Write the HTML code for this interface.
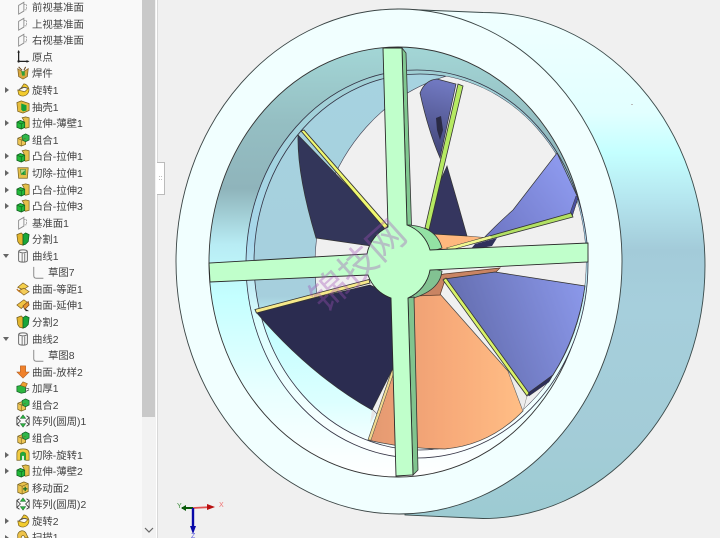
<!DOCTYPE html>
<html><head><meta charset="utf-8">
<style>
html,body{margin:0;padding:0;background:#f0f0f0;width:720px;height:538px;overflow:hidden}
#p{position:relative;width:720px;height:538px;overflow:hidden;background:#f0f0f0;font-family:"Liberation Sans","Noto Sans CJK SC",sans-serif;filter:blur(.3px)}
#tree{position:absolute;left:0;top:0;width:142px;height:538px;background:#f9f9f9;overflow:hidden}
.r{position:absolute;left:32px;margin-top:2px;font-size:10.4px;line-height:14px;color:#444;white-space:nowrap}
.r.s{left:48px}
.i{position:absolute;left:16px;width:14px;height:14px;margin-top:1px}
.i.s{left:32px}
.a{position:absolute;left:5px;width:0;height:0;border-left:4px solid #666;border-top:3px solid transparent;border-bottom:3px solid transparent}
.d{position:absolute;left:3px;width:0;height:0;border-top:4px solid #666;border-left:3px solid transparent;border-right:3px solid transparent}
#sb{position:absolute;left:142px;top:0;width:14px;height:538px;background:#f2f2f2}
#thumb{position:absolute;left:0;top:0;width:13px;height:417px;background:#c9c9c9}
#dv{position:absolute;left:156px;top:0;width:1px;height:538px;background:#fff}
#ln{position:absolute;left:157px;top:0;width:1px;height:538px;background:#d8d8d8}
#hd{position:absolute;left:157px;top:162px;width:8px;height:33px;background:#fff;border:1px solid #bbb;border-left:0;box-sizing:border-box;color:#888;font-size:7px;line-height:31px;text-align:center}
svg.m{position:absolute;left:0;top:0}
</style></head><body><div id="p">
<svg class="m" width="720" height="538" viewBox="0 0 720 538">
<defs>
<linearGradient id="gb" gradientUnits="userSpaceOnUse" x1="0" y1="10" x2="0" y2="520">
<stop offset="0" stop-color="#f0ffff"/><stop offset=".2" stop-color="#e2ffff"/><stop offset=".28" stop-color="#c4ffff"/><stop offset=".37" stop-color="#b5e6ef"/><stop offset=".47" stop-color="#a3cbd9"/><stop offset=".58" stop-color="#a6cfdc"/><stop offset=".85" stop-color="#a3ccd7"/><stop offset="1" stop-color="#9ccbd2"/>
</linearGradient>
<linearGradient id="gw" gradientUnits="userSpaceOnUse" x1="0" y1="47" x2="0" y2="476">
<stop offset="0" stop-color="#a3d6d6"/><stop offset=".17" stop-color="#95bfc3"/><stop offset=".33" stop-color="#8fb4bb"/><stop offset=".46" stop-color="#b8ecf4"/><stop offset=".58" stop-color="#c4ffff"/><stop offset=".8" stop-color="#e8ffff"/><stop offset="1" stop-color="#ffffff"/>
</linearGradient>
<linearGradient id="gst" gradientUnits="userSpaceOnUse" x1="0" y1="70" x2="0" y2="458">
<stop offset="0" stop-color="#a0cfd4"/><stop offset=".45" stop-color="#a8d8ec"/><stop offset=".65" stop-color="#dcffff"/><stop offset="1" stop-color="#ffffff"/>
</linearGradient>
<linearGradient id="gi" gradientUnits="userSpaceOnUse" x1="0" y1="70" x2="0" y2="460">
<stop offset="0" stop-color="#a6d3e0"/><stop offset=".58" stop-color="#a6cfdd"/><stop offset=".66" stop-color="#c4feff"/><stop offset=".85" stop-color="#dcffff"/><stop offset="1" stop-color="#ffffff"/>
</linearGradient>
<linearGradient id="gor" gradientUnits="userSpaceOnUse" x1="375" y1="0" x2="520" y2="0">
<stop offset="0" stop-color="#e59a72"/><stop offset=".45" stop-color="#f6a878"/><stop offset="1" stop-color="#ffbd85"/>
</linearGradient>
<linearGradient id="gd" gradientUnits="userSpaceOnUse" x1="445" y1="340" x2="585" y2="290">
<stop offset="0" stop-color="#5f68a8"/><stop offset="1" stop-color="#8b98ea"/>
</linearGradient>
<linearGradient id="ge" gradientUnits="userSpaceOnUse" x1="490" y1="240" x2="570" y2="180">
<stop offset="0" stop-color="#6e76c4"/><stop offset="1" stop-color="#8c98ec"/>
</linearGradient>
<linearGradient id="gf" gradientUnits="userSpaceOnUse" x1="450" y1="85" x2="430" y2="170">
<stop offset="0" stop-color="#7078c0"/><stop offset="1" stop-color="#383a68"/>
</linearGradient>
<clipPath id="cs"><ellipse cx="420" cy="262" rx="166" ry="188"/></clipPath>
</defs>

<path d="M397 9 L483 12.5 A222 253 0 0 1 483 518.5 L405 515 Z" fill="url(#gb)" stroke="#3a4a4a" stroke-width=".9"/>
<ellipse cx="399" cy="261.5" rx="223" ry="252.5" fill="#f1ffff" stroke="#3a4444" stroke-width=".9"/>
<ellipse cx="398" cy="262" rx="189" ry="215" fill="url(#gw)" stroke="#333" stroke-width=".9"/>
<ellipse cx="417" cy="264" rx="171" ry="194" fill="url(#gst)" stroke="#334" stroke-width=".8"/>
<ellipse cx="420" cy="262" rx="166" ry="188" fill="url(#gi)" stroke="#334" stroke-width=".8"/>
<g clip-path="url(#cs)"><ellipse cx="490" cy="265" rx="175" ry="195" fill="#f0f0f0" stroke="#445" stroke-width=".6"/></g>

<!-- Blade C orange -->
<path d="M368 440 L392 370 L415 296 L440 294 L508 371 L523 411 Q490 445 445 449 Q405 449 368 440 Z" fill="url(#gor)" stroke="#444" stroke-width=".7"/>
<path d="M368 440 L392 370 L394 372 L371 440 Z" fill="#f0d890" stroke="#444" stroke-width=".5"/>
<path d="M415 296 L420 280 L444 274 L500 268 L495 273 L445 280 L440 295 Z" fill="#c98463" stroke="#5a3a2a" stroke-width=".7"/>
<path d="M508 371 L523 411 L527 396 Z" fill="#ececec" stroke="#666" stroke-width=".4"/>
<!-- orange upper -->
<path d="M425 236 L433 232 L467 236 L490 238 L450 250 L430 252 Z" fill="#ffb87e" stroke="#444" stroke-width=".6"/>

<!-- Blade F upper -->
<path d="M420 93 Q425 80 437 79 L456 84 L440 158 Q428 130 420 93 Z" fill="url(#gf)" stroke="#333" stroke-width=".7"/>
<path d="M447 166 L434 195 L425 228 L433 234 L467 236 L458 204 Z" fill="#35365f" stroke="#333" stroke-width=".7"/>
<path d="M436 118 L441 116 L443 130 L440 140 L437 130 Z" fill="#2a2a44"/>
<path d="M458 84 L463 86 L429 230 L425 228 Z" fill="#b6ea62" stroke="#333" stroke-width=".8"/>

<!-- Blade E -->
<path d="M557 153 L578 198 L572 216 L480 242 Q495 226 513 210 Z" fill="url(#ge)" stroke="#333" stroke-width=".7"/>
<path d="M578 198 L572 217 L570 213 L576 196 Z" fill="#4a50a0" stroke="#333" stroke-width=".5"/>
<path d="M475 244 L497 238 L492 246 L470 250 Z" fill="#30315c"/>
<path d="M447 248 L571 213 L573 217 L450 250 Z" fill="#b2e063" stroke="#333" stroke-width=".8"/>
<path d="M447 248 L490 236 L492 238 L450 250 Z" fill="#f0f890"/>

<!-- Blade D -->
<path d="M444 279 L495 272 L585 286 Q578 335 553 375 L527 394 Z" fill="url(#gd)" stroke="#333" stroke-width=".8"/>
<path d="M527 394 L553 375 L549 382 L529 396 Z" fill="#2e2f58" stroke="#333" stroke-width=".4"/>
<path d="M443 280 L446 278 L529 393 L527 396 Z" fill="#d8f268" stroke="#333" stroke-width=".8"/>

<!-- Blade A -->
<path d="M298 135 Q297 175 316 238 L378 247 L388 228 Z" fill="#33365a" stroke="#333" stroke-width=".7"/>
<path d="M301 131 L304 130 L388 226 L385 229 Z" fill="#f0f870" stroke="#333" stroke-width=".9"/>
<!-- Blade B -->
<path d="M256 312 L370 285 L393 296 L393 368 L372 410 Q310 375 256 312 Z" fill="#2b2c50" stroke="#333" stroke-width=".7"/>
<path d="M255 309.5 L369 279.5 L370 283 L256.5 313 Z" fill="#f6e98a" stroke="#333" stroke-width=".9"/>
<path d="M372 410 L376 413 L370 424 Z" fill="#e6e6e6"/>

<!-- Hub back -->
<path d="M407 225 Q436 226 442 248 L430 252 L414 232 Z" fill="#93e2a4" stroke="#333" stroke-width=".8"/>
<path d="M442 271 Q440 291 410 299 L408 290 L430 268 Z" fill="#82c292" stroke="#333" stroke-width=".8"/>
<!-- Spoke sides -->
<path d="M402 48 L406 53 L411.5 225 L407 225 Z" fill="#80c890" stroke="#333" stroke-width=".8"/>
<path d="M408 298 L414 297 L418 470 L413 475 Z" fill="#80c48e" stroke="#333" stroke-width=".8"/>
<!-- Spokes + hub -->
<path d="M383 48 L402 48 L407 225 A37 37 0 0 1 430 250 L588 243 L588 262 L430 270 A37 37 0 0 1 408 298 L413 475 L396 476 L391 298 A37 37 0 0 1 368 275 L210 282 L209 263 L367 254 A37 37 0 0 1 388 227 Z" fill="#c0ffcb" stroke="#2a2a2a" stroke-width=".9"/>

<!-- speck -->
<rect x="631" y="104" width="2" height="1" fill="#bbb"/>

<!-- Watermark -->
<text x="358" y="279" transform="rotate(-42 358 266)" text-anchor="middle" font-family="'Liberation Sans','Noto Sans CJK SC',sans-serif" font-size="38" fill="#a050b8" fill-opacity=".36">锦技网</text>

<!-- Triad -->
<path d="M193 508 L182 508" stroke="#0a5a0a" stroke-width="2"/>
<path d="M186 505 L181 508 L186 511 Z" fill="#0a5a0a"/>
<path d="M193 508 L212 507" stroke="#e05050" stroke-width="1.8"/>
<path d="M207 504 L215 507 L207 510 Z" fill="#b81010"/>
<path d="M193 508 L193 530" stroke="#0808a8" stroke-width="2.4"/>
<path d="M190 526 L193 534 L196 526 Z" fill="#0808a8"/>
<text x="177" y="508" font-size="7" fill="#3c8c3c" font-family="Liberation Sans">Y</text>
<text x="219" y="507" font-size="7" fill="#f07070" font-family="Liberation Sans">X</text>
<text x="191" y="538" font-size="7" fill="#6060e0" font-family="Liberation Sans">Z</text>

<symbol id="pl" viewBox="0 0 16 16"><path d="M3 5 L9 1.5 V11.5 L3 15 Z" fill="#f8f8f8" stroke="#8a8a8a" stroke-width="1"/><path d="M9 4 H12 V10 H9" fill="none" stroke="#9a9a9a" stroke-width="1" stroke-dasharray="2 1"/></symbol>
<symbol id="or" viewBox="0 0 16 16"><path d="M3 1 V13 H14" fill="none" stroke="#222" stroke-width="1.4"/><path d="M1.5 3 L3 0 L4.5 3 Z M12 11.5 L15.5 13 L12 14.5 Z" fill="#222"/><circle cx="3" cy="13" r="1.4" fill="#222"/></symbol>
<symbol id="we" viewBox="0 0 16 16"><path d="M2 3 L8 7 L14 3 L13 12 L8 15 L3 12 Z" fill="#d9a83e" stroke="#7a5a20" stroke-width=".8"/><path d="M6 6 L10 6 L10 11 L7 11 Z" fill="#2e9e3a"/><path d="M3 1 L7 5 M11 1 L9 5" stroke="#6a4a20" stroke-width="1.2"/></symbol>
<symbol id="re" viewBox="0 0 16 16"><path d="M9 1 A7 7 0 1 1 3 13 L2 8 L10 10 L14 6 L9 5 L5 7 Z" fill="#f3cc2e" stroke="#7e6420" stroke-width=".8"/><path d="M3 8 Q8 3 13 6" fill="none" stroke="#555" stroke-width="1"/></symbol>
<symbol id="sh" viewBox="0 0 16 16"><path d="M1 3 L6 1 L15 4 V12 L8 15 L2 13 Z" fill="#e6bd3e" stroke="#7a6020" stroke-width=".8"/><path d="M6 4 L12 6 V12 L8 13 L6 11 Z" fill="#13a13a"/></symbol>
<symbol id="ex" viewBox="0 0 16 16"><path d="M7 2 L11 1 L15 2 V13 L11 14 L9 13 V5 Z" fill="#e6c04a" stroke="#75601f" stroke-width=".8"/><path d="M1 7 L5 5 L10 7 V13 L6 15 L1 13 Z" fill="#22b93a" stroke="#0f5a1c" stroke-width=".8"/><path d="M1 7 L6 9 L10 7 M6 9 V15" fill="none" stroke="#0f5a1c" stroke-width=".7"/></symbol>
<symbol id="co" viewBox="0 0 16 16"><path d="M2 6 L7 4 L11 6 V13 L6 15 L2 13 Z" fill="#eec656" stroke="#75601f" stroke-width=".8"/><path d="M7 3 L11 1 L15 3 V8 L11 10 L7 8 Z" fill="#2fb84a" stroke="#17612a" stroke-width=".8"/><path d="M2 6 L6 8 L11 6 M6 8 V15" fill="none" stroke="#75601f" stroke-width=".7"/></symbol>
<symbol id="cu" viewBox="0 0 16 16"><path d="M2 2 H14 L13 14 H3 Z" fill="#e6c04a" stroke="#75601f" stroke-width=".8"/><path d="M5 4 H11 V10 H6 Z" fill="#b5d98a" stroke="#3f7f2e" stroke-width=".7"/><path d="M6 9 L10 5 V10 Z" fill="#159a33"/></symbol>
<symbol id="sp" viewBox="0 0 16 16"><path d="M1 3 L6 1 L8 3 L8 15 L4 14 L2 11 Z" fill="#e2b52e" stroke="#6e5a1d" stroke-width=".8"/><path d="M8 3 L11 1 L15 3 L14 11 L11 14 L8 15 Z" fill="#19a63a" stroke="#0f5a1c" stroke-width=".8"/></symbol>
<symbol id="cv" viewBox="0 0 16 16"><path d="M3 3 Q3 1 8 1 T13 3 V13 Q13 15 8 15 T3 13 Z" fill="#fafafa" stroke="#666" stroke-width="1.1"/><path d="M3 3 Q8 6 13 3 M7 5 V15 M10 5 V15" fill="none" stroke="#666" stroke-width="1"/></symbol>
<symbol id="sk" viewBox="0 0 16 16"><path d="M2 1 V11 Q2 14 5 14 H13" fill="none" stroke="#888" stroke-width="1.1"/></symbol>
<symbol id="of" viewBox="0 0 16 16"><path d="M2 6 L8 1 L14 5 L8 9 Z" fill="#f5d04c" stroke="#7a5a1d" stroke-width=".8"/><path d="M3 10 L9 7 L15 11 L9 15 Z" fill="#f4cc58" stroke="#7a5a1d" stroke-width=".8"/><path d="M1 8 Q3 11 6 12" fill="none" stroke="#c07520" stroke-width="1.4"/></symbol>
<symbol id="xt" viewBox="0 0 16 16"><path d="M1 8 L9 2 L13 5 L6 12 Z" fill="#f2c443" stroke="#7a5a1d" stroke-width=".8"/><path d="M8 9 L14 4 L15 8 L10 13 Z" fill="#e9952e" stroke="#7a4a1d" stroke-width=".8"/><path d="M10 12 L15 15 L11 15 Z" fill="#222"/></symbol>
<symbol id="lo" viewBox="0 0 16 16"><path d="M5 1 H11 V8 H15 L8 15 L1 8 H5 Z" fill="#f0812a" stroke="#a85418" stroke-width=".6"/></symbol>
<symbol id="tk" viewBox="0 0 16 16"><path d="M1 6 L6 5 L11 7 V13 L6 14 L1 12 Z" fill="#2cb73f" stroke="#17612a" stroke-width=".8"/><path d="M5 5 L8 1 L13 3 L11 7 Z" fill="#f0a030" stroke="#8a5a1d" stroke-width=".7"/><path d="M11 8 L15 9 M11 12 L15 10" stroke="#555" stroke-width="1"/></symbol>
<symbol id="pa" viewBox="0 0 16 16"><path d="M8 1 L11 5 H5 Z M8 15 L5 11 H11 Z" fill="#2cb73f" stroke="#17612a" stroke-width=".6"/><path d="M1 4 L5 8 L1 12 Z M15 4 L11 8 L15 12 Z" fill="#f7f7f7" stroke="#333" stroke-width=".9"/><path d="M1 4 L4 2 M15 4 L12 2 M1 12 L4 14 M15 12 L12 14" stroke="#333" stroke-width="1"/></symbol>
<symbol id="cr" viewBox="0 0 16 16"><path d="M1 14 V6 Q1 1 8 1 T15 6 V14 H11 V7 Q11 5 8 5 T5 7 V14 Z" fill="#f0ca42" stroke="#75601f" stroke-width=".8"/><path d="M5 14 V6 L8 4 L11 6 V14 H9 V9 H7 V14 Z" fill="#1faa3a"/></symbol>
<symbol id="mv" viewBox="0 0 16 16"><path d="M2 4 L9 1 L14 3 V12 L7 15 L2 13 Z" fill="#e9c24c" stroke="#75601f" stroke-width=".8"/><path d="M2 4 L7 6 L14 3 M7 6 V15" fill="none" stroke="#75601f" stroke-width=".7"/><path d="M8 9 H13 M10.5 6.5 V11.5" stroke="#126b24" stroke-width="1.4"/></symbol>
<symbol id="sw" viewBox="0 0 16 16"><path d="M2 15 V7 A5 5 0 0 1 12 5 L14 9 H10 A2 2 0 0 0 6 8 V15 Z" fill="#eec34a" stroke="#75601f" stroke-width=".8"/></symbol>
</svg>

<div id="tree">
<svg class="i" style="top:0px"><use href="#pl"/></svg><div class="r" style="top:0px">前视基准面</div>
<svg class="i" style="top:16px"><use href="#pl"/></svg><div class="r" style="top:17px">上视基准面</div>
<svg class="i" style="top:32px"><use href="#pl"/></svg><div class="r" style="top:33px">右视基准面</div>
<svg class="i" style="top:49px"><use href="#or"/></svg><div class="r" style="top:50px">原点</div>
<svg class="i" style="top:65px"><use href="#we"/></svg><div class="r" style="top:66px">焊件</div>
<div class="a" style="top:87px"></div><svg class="i" style="top:82px"><use href="#re"/></svg><div class="r" style="top:83px">旋转1</div>
<svg class="i" style="top:99px"><use href="#sh"/></svg><div class="r" style="top:100px">抽壳1</div>
<div class="a" style="top:120px"></div><svg class="i" style="top:115px"><use href="#ex"/></svg><div class="r" style="top:116px">拉伸-薄壁1</div>
<svg class="i" style="top:132px"><use href="#co"/></svg><div class="r" style="top:133px">组合1</div>
<div class="a" style="top:153px"></div><svg class="i" style="top:148px"><use href="#ex"/></svg><div class="r" style="top:149px">凸台-拉伸1</div>
<div class="a" style="top:170px"></div><svg class="i" style="top:165px"><use href="#cu"/></svg><div class="r" style="top:166px">切除-拉伸1</div>
<div class="a" style="top:187px"></div><svg class="i" style="top:182px"><use href="#ex"/></svg><div class="r" style="top:183px">凸台-拉伸2</div>
<div class="a" style="top:203px"></div><svg class="i" style="top:198px"><use href="#ex"/></svg><div class="r" style="top:199px">凸台-拉伸3</div>
<svg class="i" style="top:215px"><use href="#pl"/></svg><div class="r" style="top:216px">基准面1</div>
<svg class="i" style="top:231px"><use href="#sp"/></svg><div class="r" style="top:232px">分割1</div>
<div class="d" style="top:254px"></div><svg class="i" style="top:248px"><use href="#cv"/></svg><div class="r" style="top:249px">曲线1</div>
<svg class="i s" style="top:265px"><use href="#sk"/></svg><div class="r s" style="top:265px">草图7</div>
<svg class="i" style="top:281px"><use href="#of"/></svg><div class="r" style="top:282px">曲面-等距1</div>
<svg class="i" style="top:297px"><use href="#xt"/></svg><div class="r" style="top:298px">曲面-延伸1</div>
<svg class="i" style="top:314px"><use href="#sp"/></svg><div class="r" style="top:315px">分割2</div>
<div class="d" style="top:337px"></div><svg class="i" style="top:331px"><use href="#cv"/></svg><div class="r" style="top:332px">曲线2</div>
<svg class="i s" style="top:348px"><use href="#sk"/></svg><div class="r s" style="top:348px">草图8</div>
<svg class="i" style="top:364px"><use href="#lo"/></svg><div class="r" style="top:365px">曲面-放样2</div>
<svg class="i" style="top:380px"><use href="#tk"/></svg><div class="r" style="top:381px">加厚1</div>
<svg class="i" style="top:397px"><use href="#co"/></svg><div class="r" style="top:398px">组合2</div>
<svg class="i" style="top:413px"><use href="#pa"/></svg><div class="r" style="top:414px">阵列(圆周)1</div>
<svg class="i" style="top:430px"><use href="#co"/></svg><div class="r" style="top:431px">组合3</div>
<div class="a" style="top:452px"></div><svg class="i" style="top:447px"><use href="#cr"/></svg><div class="r" style="top:448px">切除-旋转1</div>
<div class="a" style="top:468px"></div><svg class="i" style="top:463px"><use href="#ex"/></svg><div class="r" style="top:464px">拉伸-薄壁2</div>
<svg class="i" style="top:480px"><use href="#mv"/></svg><div class="r" style="top:481px">移动面2</div>
<svg class="i" style="top:496px"><use href="#pa"/></svg><div class="r" style="top:497px">阵列(圆周)2</div>
<div class="a" style="top:518px"></div><svg class="i" style="top:513px"><use href="#re"/></svg><div class="r" style="top:514px">旋转2</div>
<div class="a" style="top:535px"></div><svg class="i" style="top:529px"><use href="#sw"/></svg><div class="r" style="top:530px">扫描1</div>
</div>

<div id="sb"><div id="thumb"></div>
<svg style="position:absolute;left:2px;top:526px" width="10" height="8"><path d="M1 2 L5 6 L9 2" fill="none" stroke="#666" stroke-width="1.2"/></svg>
</div>
<div id="dv"></div><div id="ln"></div>
<div id="hd">::</div>
</div></body></html>
